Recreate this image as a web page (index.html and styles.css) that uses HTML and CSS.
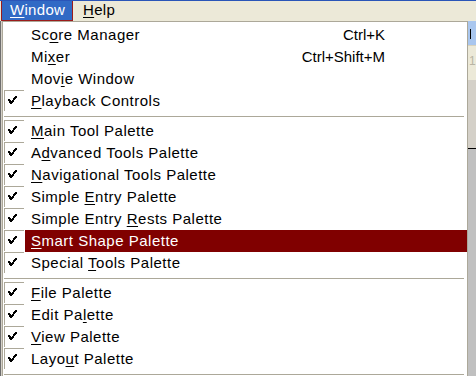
FILE: index.html
```html
<!DOCTYPE html>
<html>
<head>
<meta charset="utf-8">
<link rel="stylesheet" href="styles.css">
</head>
<body>
<div class="menubar">
  <div class="mb-item active"><u>W</u>indow</div>
  <div class="mb-item"><u>H</u>elp</div>
</div>
<div class="stage">
  <div class="left-strip"></div>
  <div class="menu">
    <div class="item"><span class="chk"></span><span class="label">Sc<u>o</u>re Manager</span><span class="key">Ctrl+K</span></div>
    <div class="item"><span class="chk"></span><span class="label">Mi<u>x</u>er</span><span class="key">Ctrl+Shift+M</span></div>
    <div class="item"><span class="chk"></span><span class="label">Mov<u>i</u>e Window</span></div>
    <div class="item"><span class="chk on"><svg viewBox="0 0 20 21" width="20" height="21"><path d="M5 10 L7 13 L12 7" /></svg></span><span class="label"><u>P</u>layback Controls</span></div>
    <div class="sep"></div>
    <div class="item"><span class="chk on"><svg viewBox="0 0 20 21" width="20" height="21"><path d="M5 10 L7 13 L12 7" /></svg></span><span class="label"><u>M</u>ain Tool Palette</span></div>
    <div class="item"><span class="chk on"><svg viewBox="0 0 20 21" width="20" height="21"><path d="M5 10 L7 13 L12 7" /></svg></span><span class="label">A<u>d</u>vanced Tools Palette</span></div>
    <div class="item"><span class="chk on"><svg viewBox="0 0 20 21" width="20" height="21"><path d="M5 10 L7 13 L12 7" /></svg></span><span class="label"><u>N</u>avigational Tools Palette</span></div>
    <div class="item"><span class="chk on"><svg viewBox="0 0 20 21" width="20" height="21"><path d="M5 10 L7 13 L12 7" /></svg></span><span class="label">Simple <u>E</u>ntry Palette</span></div>
    <div class="item"><span class="chk on"><svg viewBox="0 0 20 21" width="20" height="21"><path d="M5 10 L7 13 L12 7" /></svg></span><span class="label">Simple Entry <u>R</u>ests Palette</span></div>
    <div class="item hot"><span class="chk on"><svg viewBox="0 0 20 21" width="20" height="21"><path d="M5 10 L7 13 L12 7" /></svg></span><span class="label"><u>S</u>mart Shape Palette</span></div>
    <div class="item"><span class="chk on"><svg viewBox="0 0 20 21" width="20" height="21"><path d="M5 10 L7 13 L12 7" /></svg></span><span class="label">Special <u>T</u>ools Palette</span></div>
    <div class="sep"></div>
    <div class="item"><span class="chk on"><svg viewBox="0 0 20 21" width="20" height="21"><path d="M5 10 L7 13 L12 7" /></svg></span><span class="label"><u>F</u>ile Palette</span></div>
    <div class="item"><span class="chk on"><svg viewBox="0 0 20 21" width="20" height="21"><path d="M5 10 L7 13 L12 7" /></svg></span><span class="label">Edit Pa<u>l</u>ette</span></div>
    <div class="item"><span class="chk on"><svg viewBox="0 0 20 21" width="20" height="21"><path d="M5 10 L7 13 L12 7" /></svg></span><span class="label"><u>V</u>iew Palette</span></div>
    <div class="item"><span class="chk on"><svg viewBox="0 0 20 21" width="20" height="21"><path d="M5 10 L7 13 L12 7" /></svg></span><span class="label">Layo<u>u</u>t Palette</span></div>
    <div class="sep"></div>
  </div>
  <div class="right-strip">
    <div class="rs-blue"><span class="note"></span></div>
    <div class="rs-beige"><span class="rs-num">1</span></div>
    <div class="rs-light"></div>
    <div class="rs-gray"></div>
  </div>
</div>
</body>
</html>
```

FILE: styles.css
```css
html, body {
  margin: 0;
  padding: 0;
  width: 476px;
  height: 376px;
  overflow: hidden;
  background: #c0c0c0;
  font-family: "Liberation Sans", Arial, sans-serif;
  font-size: 15px;
  color: #000;
}

u {
  text-decoration: underline;
  text-underline-offset: 2px;
}

.menubar {
  height: 20px;
  border-top: 1px solid #2a55b8;
  background: #ece9d8;
  display: flex;
  align-items: stretch;
}

.mb-item {
  line-height: 18px;
  padding: 0 10px;
  letter-spacing: 0.3px;
}

.mb-item.active {
  margin-left: 1px;
  width: 72px;
  box-sizing: border-box;
  padding: 0 0 0 8px;
  background: #316ac5;
  color: #fff;
  border: 1px solid #9b1b1b;
  border-top: none;
}

.stage {
  display: flex;
  height: 400px;
}

.left-strip {
  width: 1px;
  border-right: 1px solid #d4d0c8;
  background: #6e6e6e;
}

.menu {
  width: 464px;
  background: #fff;
  border: 1px solid #aca899;
  border-bottom: none;
  padding-top: 2px;
  display: flex;
  flex-direction: column;
}

.item {
  position: relative;
  height: 22px;
  display: flex;
  align-items: stretch;
  line-height: 22px;
  padding-left: 1px;
}

.chk {
  width: 20px;
  height: 21px;
  box-sizing: border-box;
  flex: none;
}

.chk.on {
  border-top: 1px solid #aca899;
  border-left: 1px solid #aca899;
}

.chk svg {
  display: block;
  margin: -1px 0 0 -1px;
}

.chk path {
  fill: none;
  stroke: #000;
  stroke-width: 2;
  stroke-linecap: square;
  shape-rendering: crispEdges;
}

.label {
  flex: 1;
  padding-left: 6px;
  margin-left: 1px;
  white-space: nowrap;
  letter-spacing: 0.5px;
}

.key {
  position: absolute;
  right: 82px;
  white-space: nowrap;
}

.item.hot .label {
  background: #800000;
  color: #fff;
}

.sep {
  height: 8px;
  display: flex;
  align-items: center;
  padding: 0 3px 0 1px;
}

.sep::before {
  content: "";
  flex: 1;
  height: 1px;
  background: #aca899;
}

.right-strip {
  flex: 1;
  display: flex;
  flex-direction: column;
}

.rs-blue {
  height: 24px;
  background: #a9c6ee;
  position: relative;
}

.note {
  position: absolute;
  left: 2px;
  top: 8px;
  width: 1px;
  height: 10px;
  background: #000;
}

.rs-beige {
  height: 34px;
  background: #ece9d8;
  border-top: 1px solid #d8d2bd;
  color: #b8b4a4;
  font-size: 12px;
  line-height: 30px;
  padding-left: 1px;
}

.rs-light {
  height: 68px;
  background: #d4d0c8;
  border-bottom: 1px solid #000;
}

.rs-gray {
  flex: 1;
  background: #c0c0c0;
}
```
